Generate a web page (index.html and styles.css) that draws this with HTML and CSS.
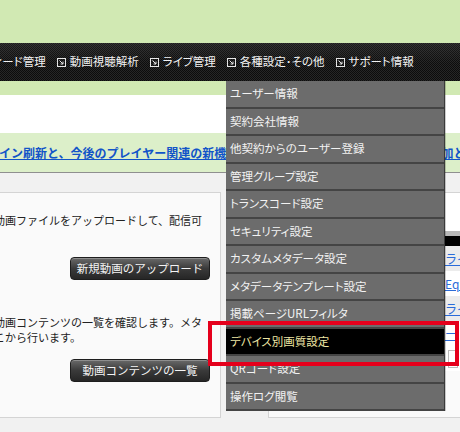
FILE: index.html
```html
<!DOCTYPE html>
<html lang="ja">
<head>
<meta charset="utf-8">
<title>管理画面</title>
<link rel="stylesheet" href="styles.css">
</head>
<body>
<div class="page">
  <div class="brand"></div>
  <nav class="gnav">
    <ul class="gnav-list">
      <li class="gnav-item"><svg class="ico" viewBox="0 0 9 9"><rect x="0.5" y="0.5" width="8" height="8"/><path d="M2.5 2.5L6 6M6 3.6V6H3.6"/></svg><span>フィード管理</span></li>
      <li class="gnav-item"><svg class="ico" viewBox="0 0 9 9"><rect x="0.5" y="0.5" width="8" height="8"/><path d="M2.5 2.5L6 6M6 3.6V6H3.6"/></svg><span>動画視聴解析</span></li>
      <li class="gnav-item"><svg class="ico" viewBox="0 0 9 9"><rect x="0.5" y="0.5" width="8" height="8"/><path d="M2.5 2.5L6 6M6 3.6V6H3.6"/></svg><span>ライブ管理</span></li>
      <li class="gnav-item"><svg class="ico" viewBox="0 0 9 9"><rect x="0.5" y="0.5" width="8" height="8"/><path d="M2.5 2.5L6 6M6 3.6V6H3.6"/></svg><span>各種設定･その他</span></li>
      <li class="gnav-item"><svg class="ico" viewBox="0 0 9 9"><rect x="0.5" y="0.5" width="8" height="8"/><path d="M2.5 2.5L6 6M6 3.6V6H3.6"/></svg><span>サポート情報</span></li>
    </ul>
  </nav>
  <div class="subbar"></div>
  <div class="spacer"></div>
  <div class="notice"><a href="#" class="notice-link">デザイン刷新と、今後のプレイヤー関連の新機能についてのお知らせ（新しい機能の追加と</a></div>
  <div class="content">
    <section class="panel panel-left">
      <div class="block">
        <p class="desc">お手元にある新しい動画ファイルをアップロードして、配信可<br>能な状態にします。</p>
        <div class="actions"><button class="btn">新規動画のアップロード</button></div>
      </div>
      <div class="block">
        <p class="desc">アップロード済みの動画コンテンツの一覧を確認します。メタ<br>データ編集などもここから行います。</p>
        <div class="actions"><button class="btn">動画コンテンツの一覧</button></div>
      </div>
    </section>
    <section class="panel panel-right">
      <div class="rp-top"></div>
      <div class="rp-bar"></div>
      <div class="rp-head"></div>
      <div class="rp-row alt"><span class="rp-key"></span><a href="#" class="rp-link">ライブ配信</a></div>
      <div class="rp-row"><span class="rp-key"></span><a href="#" class="rp-link">Equipment</a></div>
      <div class="rp-row alt"><span class="rp-key"></span><a href="#" class="rp-link">ライブ</a></div>
      <div class="rp-row"><span class="rp-key"></span><a href="#" class="rp-link">ー</a></div>
      <div class="rp-row"><span class="rp-key"></span><span class="rp-input"></span></div>
    </section>
  </div>
</div>

<ul class="dropdown">
  <li class="dd-item">ユーザー情報</li>
  <li class="dd-item">契約会社情報</li>
  <li class="dd-item">他契約からのユーザー登録</li>
  <li class="dd-item">管理グループ設定</li>
  <li class="dd-item">トランスコード設定</li>
  <li class="dd-item">セキュリティ設定</li>
  <li class="dd-item">カスタムメタデータ設定</li>
  <li class="dd-item">メタデータテンプレート設定</li>
  <li class="dd-item">掲載ページURLフィルタ</li>
  <li class="dd-item is-active">デバイス別画質設定</li>
  <li class="dd-item">QRコード設定</li>
  <li class="dd-item">操作ログ閲覧</li>
</ul>
<div class="callout"></div>
</body>
</html>
```
FILE: styles.css
```css
html, body {
  margin: 0;
  padding: 0;
}
body {
  width: 460px;
  height: 432px;
  overflow: hidden;
  position: relative;
  background: #f1f1f1;
  font-family: "Noto Sans CJK JP", "Liberation Sans", sans-serif;
  color: #222;
}
.page {
  width: 460px;
  overflow: hidden;
}
.brand {
  height: 43px;
  background: #d1e9b3;
}
.gnav {
  height: 38px;
  background:
    linear-gradient(rgba(255,255,255,0.07), rgba(255,255,255,0) 55%),
    repeating-conic-gradient(#0c0c0c 0% 25%, #262626 0% 50%) 0 0 / 2px 2px;
  overflow: hidden;
}
.gnav-list {
  list-style: none;
  margin: 0 0 0 -29px;
  padding: 0;
  height: 38px;
  display: flex;
  align-items: center;
  gap: 11px;
  white-space: nowrap;
}
.gnav-item {
  display: flex;
  align-items: center;
  gap: 4px;
  color: #f2f2f2;
  font-size: 11.5px;
  line-height: 1;
  font-feature-settings: "palt";
}
.ico {
  width: 9px;
  height: 9px;
  flex: none;
  fill: none;
  stroke: #e6e6e6;
  stroke-width: 1;
}
.subbar {
  height: 14px;
  background: #d1e9b3;
}
.spacer {
  height: 38px;
  background: #fff;
}
.notice {
  height: 39px;
  background: #dcefc9;
  border-bottom: 1px solid #8f8f8f;
  display: flex;
  align-items: center;
  overflow: hidden;
  white-space: nowrap;
}
.notice-link {
  margin-left: -25px;
  color: #1254c8;
  font-size: 12px;
  font-weight: bold;
  text-decoration: underline;
}
.content {
  display: flex;
  align-items: flex-start;
  padding-top: 19px;
  margin-left: -120px;
  height: 240px;
}
.panel {
  box-sizing: border-box;
  border: 1px solid #d4d4d4;
  flex: none;
}
.panel-left {
  width: 341px;
  height: 226px;
  background: #fafafa;
  padding: 20px 10px 0 14px;
}
.desc {
  margin: 0 0 14px;
  font-size: 11px;
  line-height: 15px;
  white-space: nowrap;
  color: #222;
}
.block + .block {
  margin-top: 35px;
}
.actions {
  display: flex;
  justify-content: flex-end;
}
.btn {
  width: 140px;
  height: 23px;
  padding: 0;
  border: 1px solid #1e1e1e;
  border-radius: 4px;
  background: linear-gradient(#6a6a6a, #3a3a3a 50%, #262626);
  box-shadow: inset 0 1px 0 rgba(255,255,255,0.25);
  color: #f4f4f4;
  font-family: "Noto Sans CJK JP", sans-serif;
  font-size: 11.5px;
  line-height: 21px;
}
.panel-right {
  margin-left: 47px;
  width: 230px;
  height: 226px;
  background: #fafafa;
}
.rp-top {
  height: 38px;
  background: #fff;
}
.rp-bar {
  height: 5px;
  background: #b8b8b8;
}
.rp-head {
  height: 10px;
  background: #000;
}
.rp-row {
  height: 25px;
  display: flex;
  align-items: center;
  background: #fff;
}
.rp-row.alt {
  background: #ececec;
}
.rp-key {
  width: 176px;
  flex: none;
}
.rp-link {
  color: #2a6bd8;
  font-size: 12px;
  text-decoration: underline;
  white-space: nowrap;
}
.rp-input {
  width: 10px;
  height: 18px;
  box-sizing: border-box;
  border: 1px solid #bbb;
  background: #fff;
  margin-left: 3px;
}
.dropdown {
  position: absolute;
  left: 226px;
  top: 81px;
  width: 218px;
  margin: 0;
  padding: 0;
  list-style: none;
  background: #6c6c6c;
  border-right: 1px solid #3a3a3a;
  box-shadow: 1px 0 0 rgba(0,0,0,0.2);
}
.dd-item {
  box-sizing: border-box;
  height: 27.5px;
  padding-left: 4px;
  display: flex;
  align-items: center;
  border-bottom: 2px solid #444;
  color: #f2f2f2;
  font-size: 11.5px;
  line-height: 1;
  font-feature-settings: "palt";
  white-space: nowrap;
}
.dd-item.is-active {
  background: #000;
  color: #eee6a4;
}
.callout {
  position: absolute;
  left: 208px;
  top: 321px;
  width: 251px;
  height: 45px;
  box-sizing: border-box;
  border: 4px solid #e5001c;
}
```
